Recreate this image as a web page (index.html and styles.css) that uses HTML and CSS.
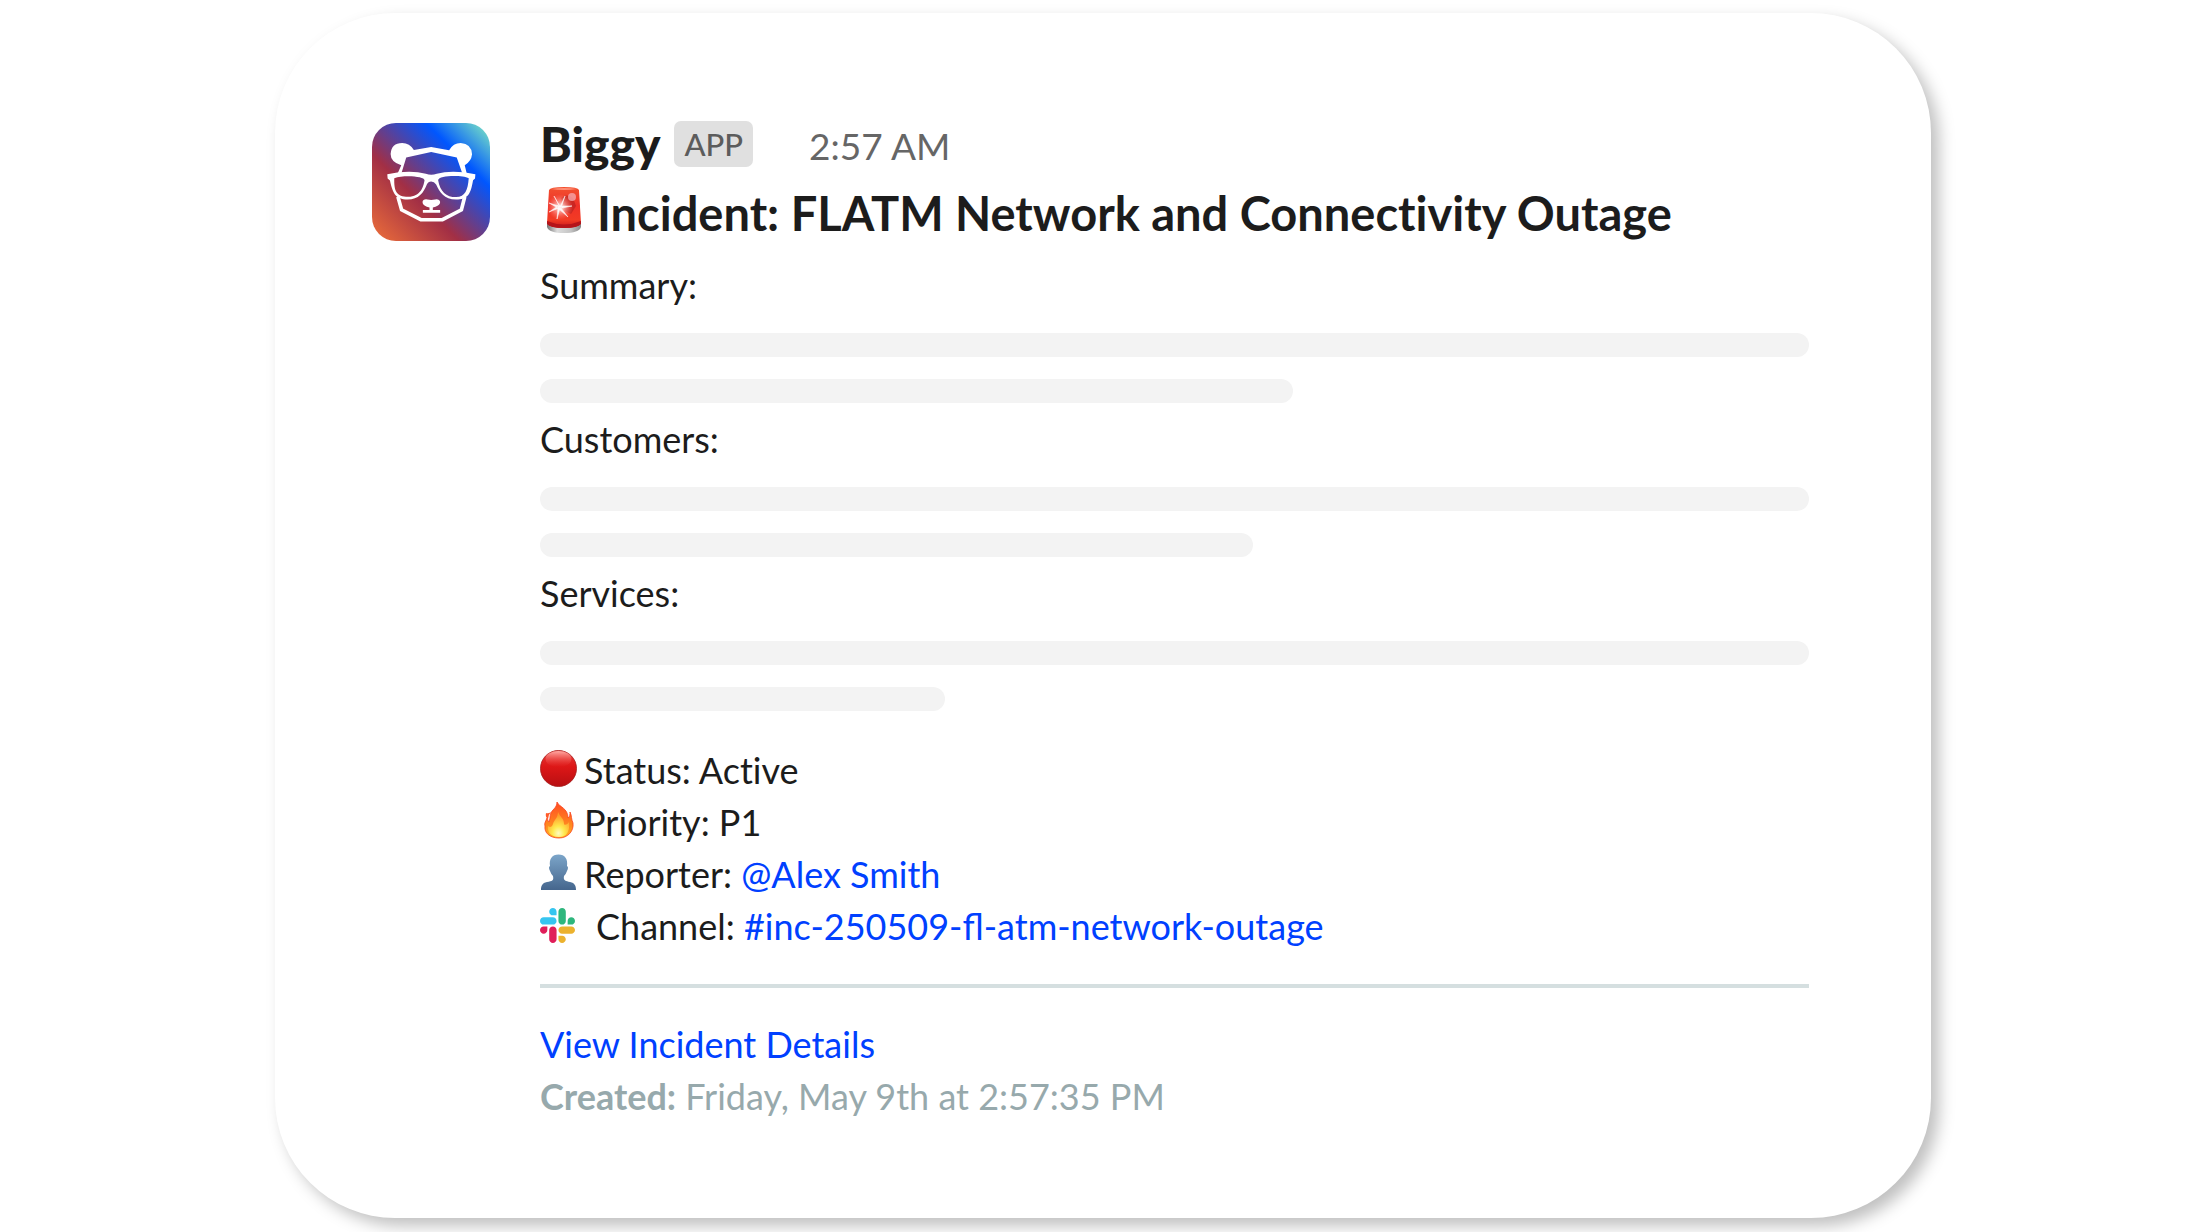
FILE: index.html
```html
<!DOCTYPE html>
<html lang="en">
<head>
  <meta charset="UTF-8">
  <meta name="viewport" content="width=device-width, initial-scale=1.0">
  <title>Biggy Incident</title>
  <link rel="stylesheet" href="styles.css">
</head>
<body>

<main class="card">
  <!-- Biggy avatar -->
  <svg class="avatar" viewBox="35 38 355 355" aria-hidden="true">
    <defs>
      <linearGradient id="avatarFill" gradientUnits="userSpaceOnUse" x1="35" y1="393" x2="390" y2="38">
        <stop offset="0.05" stop-color="#e4673b"/>
        <stop offset="0.37" stop-color="#a22f45"/>
        <stop offset="0.73" stop-color="#0057ff"/>
        <stop offset="0.96" stop-color="#70d8c8"/>
      </linearGradient>
    </defs>
    <rect x="35" y="38" width="355" height="355" rx="72" fill="url(#avatarFill)"/>
    <g fill="#fff">
      <path d="M112 190L123 165Q91 155 91 131Q93 98 126 98Q148 98 161 119L213 110L267 120Q279 98 302 98Q334 100 336 132Q334 153 314 165L320 190L306 188L290 142L213 125L138 142L124 188Z"/>
      <path fill-rule="evenodd" d="M81 192Q150 178 197 191Q213 197 230 191Q275 178 346 192L345 205L339 210C332 252 323 268 288 268C252 268 238 246 228 223Q222 214 213 214Q204 214 200 223C190 248 176 268 142 268C106 268 98 251 89 211L82 205ZM102 204C101 242 108 260 144 260C181 259 190 230 193 210C194 198 130 193 102 204ZM234 210C240 244 258 261 288 261C316 259 323 240 326 204C306 194 235 195 234 210Z"/>
      <path d="M187 276Q188 266 202 268L213 270L225 268Q238 266 240 276Q240 286 226 290L218 292V300H240V308H188V300H208V292L200 290Q187 285 187 276Z"/>
    </g>
    <path d="M113 260L124 299L182 329H247L304 299L314 260" fill="none" stroke="#fff" stroke-width="11"/>
  </svg>

  <article class="message">
    <header class="sender">
      <span class="name">Biggy</span>
      <span class="badge">APP</span>
      <time class="time">2:57 AM</time>
    </header>

    <h1 class="title">
      <svg class="siren" viewBox="0 0 36 48" aria-hidden="true">
        <defs>
          <linearGradient id="sirenBase" x1="0" x2="1">
            <stop offset="0" stop-color="#777"/>
            <stop offset="0.3" stop-color="#ddd"/>
            <stop offset="0.7" stop-color="#c4c4c4"/>
            <stop offset="1" stop-color="#888"/>
          </linearGradient>
          <linearGradient id="sirenGlass" x1="0" y1="0" x2="0" y2="1">
            <stop offset="0" stop-color="#f2512f"/>
            <stop offset="0.45" stop-color="#ef3028"/>
            <stop offset="0.8" stop-color="#f23b24"/>
            <stop offset="1" stop-color="#c5161b"/>
          </linearGradient>
          <radialGradient id="sirenGlow">
            <stop offset="0" stop-color="#fff"/>
            <stop offset="0.3" stop-color="#ffc6c0" stop-opacity="0.8"/>
            <stop offset="1" stop-color="#ff7365" stop-opacity="0"/>
          </radialGradient>
        </defs>
        <path d="M1 37Q18 41 35 37V41Q33 47 18 47Q3 47 1 41Z" fill="url(#sirenBase)"/>
        <path d="M3 4Q4 1 18 1Q32 1 33 4L35 37Q33 42 18 42Q3 42 1 37Z" fill="url(#sirenGlass)"/>
        <path d="M1 35Q18 42 35 35V38Q32 42 18 42Q4 42 1 38Z" fill="#b5141a"/>
        <path d="M5 3Q18 1 31 3Q18 5 5 3Z" fill="#ff9077"/>
        <path d="M15 12Q21 7 27 12L30 20L25 28L19 25Z" fill="#a61a1b" opacity="0.5"/>
        <circle cx="26" cy="11" r="4" fill="#f5a6aa" opacity="0.8"/>
        <circle cx="14" cy="21" r="13" fill="url(#sirenGlow)"/>
        <path d="M14 21L8 10L13 19ZM14 21L19 10L16 19ZM15 20L26 20L16 22ZM15 22L22 31L13 23ZM14 22L11 33L12 22ZM13 22L3 26L12 20ZM13 20L3 17L12 22Z" fill="#fff" stroke="#fff" stroke-width="0.6" opacity="0.9"/>
      </svg>
      <span>Incident: FLATM Network and Connectivity Outage</span>
    </h1>

    <section class="field">
      <p class="label">Summary:</p>
      <div class="bar"></div>
      <div class="bar bar-summary"></div>
    </section>
    <section class="field">
      <p class="label">Customers:</p>
      <div class="bar"></div>
      <div class="bar bar-customers"></div>
    </section>
    <section class="field">
      <p class="label">Services:</p>
      <div class="bar"></div>
      <div class="bar bar-services"></div>
    </section>

    <ul class="details">
      <li>
        <svg class="icon" viewBox="0 0 37 37" aria-hidden="true">
          <defs>
            <linearGradient id="redDot" x1="0" y1="0" x2="0" y2="1">
              <stop offset="0" stop-color="#e53c38"/>
              <stop offset="0.45" stop-color="#dd1717"/>
              <stop offset="1" stop-color="#b80f12"/>
            </linearGradient>
            <linearGradient id="dotShine" x1="0" y1="0" x2="0" y2="1">
              <stop offset="0" stop-color="#ffaaa5"/>
              <stop offset="1" stop-color="#ee3a36" stop-opacity="0"/>
            </linearGradient>
          </defs>
          <circle cx="18.5" cy="18.5" r="18" fill="url(#redDot)" stroke="#a51c1b" stroke-width="0.8"/>
          <ellipse cx="18.5" cy="9" rx="13" ry="8" fill="url(#dotShine)"/>
        </svg>
        <span>Status: Active</span>
      </li>
      <li>
        <svg class="icon" viewBox="0 0 37 37" aria-hidden="true">
          <defs>
            <linearGradient id="flame" x1="0" y1="0" x2="0" y2="1">
              <stop offset="0" stop-color="#ff4b24"/>
              <stop offset="0.5" stop-color="#ff7a20"/>
              <stop offset="1" stop-color="#ffb01f"/>
            </linearGradient>
            <radialGradient id="flameCore" cx="0.5" cy="0.85" r="0.7">
              <stop offset="0" stop-color="#fffbc0"/>
              <stop offset="0.4" stop-color="#ffe94d"/>
              <stop offset="1" stop-color="#ff9c2a"/>
            </radialGradient>
          </defs>
          <path d="M17 0C19 5 28 6 28 16C30 15 30 12 30 10C32 14 31 17 33 21C34 29 28 36 19 36C10 36 4 31 5 24C4 21 6 19 7 16C8 18 8 19 9 20C11 15 9 12 13 8C16 5 17 3 17 0Z" fill="url(#flame)" stroke="#f9421e" stroke-width="0.8"/>
          <path d="M6 11Q8 12 11 10Q8 13 8 17Q5 15 6 11Z" fill="#ff5a28"/>
          <path d="M18 10C20 15 24 16 24 22C25 24 28 22 29 20C30 29 27 35 19 35C10 35 7 29 8 24C10 26 12 25 13 22C14 18 18 16 18 10Z" fill="url(#flameCore)"/>
        </svg>
        <span>Priority: P1</span>
      </li>
      <li>
        <svg class="icon" viewBox="0 0 37 37" aria-hidden="true">
          <defs>
            <linearGradient id="bust" x1="0" y1="0" x2="0" y2="1">
              <stop offset="0" stop-color="#7ca5c9"/>
              <stop offset="1" stop-color="#45668d"/>
            </linearGradient>
          </defs>
          <path d="M18.500 0.500C25 0.500 28 5 27 12Q29 13 27 17Q26 20 24 22C23 27 26 27 30 28C35 29 36 32 36 36H1C1 32 2 29 7 28C12 27 14 27 13 22Q11 20 10 17Q8 13 10 12C9 5 12 0.500 18.500 0.500Z" fill="url(#bust)"/>
        </svg>
        <span>Reporter: <a href="#">@Alex Smith</a></span>
      </li>
      <li class="channel">
        <svg class="slack" viewBox="0 0 122.8 122.8" aria-hidden="true">
          <path d="M25.800 77.600c0 7.100-5.800 12.900-12.900 12.900S0 84.700 0 77.600s5.800-12.900 12.900-12.900h12.900v12.900zm6.500 0c0-7.100 5.800-12.900 12.900-12.900s12.900 5.800 12.900 12.900v32.300c0 7.100-5.800 12.900-12.900 12.900s-12.900-5.800-12.900-12.900V77.600z" fill="#e01e5a"/>
          <path d="M45.200 25.800c-7.100 0-12.900-5.800-12.900-12.900S38.100 0 45.200 0s12.900 5.800 12.900 12.900v12.900H45.200zm0 6.500c7.100 0 12.900 5.800 12.900 12.900s-5.800 12.900-12.900 12.900H12.900C5.800 58.100 0 52.300 0 45.200s5.800-12.900 12.900-12.900h32.300z" fill="#36c5f0"/>
          <path d="M97 45.200c0-7.100 5.800-12.900 12.900-12.900s12.900 5.800 12.900 12.900-5.800 12.900-12.900 12.900H97V45.200zm-6.500 0c0 7.100-5.800 12.900-12.900 12.900s-12.900-5.800-12.900-12.900V12.900C64.700 5.800 70.500 0 77.600 0s12.900 5.800 12.900 12.900v32.300z" fill="#2eb67d"/>
          <path d="M77.600 97c7.100 0 12.900 5.800 12.900 12.900s-5.800 12.900-12.900 12.900-12.900-5.800-12.900-12.900V97h12.900zm0-6.500c-7.100 0-12.900-5.800-12.900-12.900s5.800-12.900 12.900-12.900h32.300c7.100 0 12.900 5.800 12.900 12.900s-5.800 12.900-12.900 12.900H77.600z" fill="#ecb22e"/>
        </svg>
        <span>Channel: <a href="#">#inc-250509-fl-atm-network-outage</a></span>
      </li>
    </ul>

    <hr class="divider">

    <footer>
      <a href="#">View Incident Details</a>
      <p class="created"><strong>Created:</strong> Friday, May 9th at 2:57:35 PM</p>
    </footer>
  </article>
</main>

</body>
</html>
```
FILE: styles.css
```css
* {
  box-sizing: border-box;
}

body {
  margin: 0;
  padding: 13px 270px 14px 275px;
  background: #fff;
  color: #1c1c1c;
  font-family: Lato, sans-serif;
  font-size: 36px;
  font-variant-ligatures: none;
  line-height: 52px;
}

h1, p, ul {
  margin: 0;
  padding: 0;
}

a {
  color: #0040ff;
  text-decoration: none;
}

.card {
  display: flex;
  align-items: flex-start;
  gap: 50px;
  padding: 102px 122px 96px 97px;
  background: #fff;
  border-radius: 120px;
  box-shadow: 8px 8px 16px rgba(0, 0, 0, 0.25);
}

.avatar {
  flex: none;
  width: 118px;
  height: 118px;
  margin-top: 8px;
}

.message {
  flex: 1;
  min-width: 0;
}

/* Sender row */
.sender {
  display: flex;
  align-items: center;
  height: 58px;
  line-height: 58px;
}

.name {
  font-family: "Lato Black", Lato, sans-serif;
  font-size: 48px;
  font-weight: 900;
}

.badge {
  margin-left: 14px;
  padding: 0 10px;
  border-radius: 7px;
  background: #e0e0e0;
  color: #5c5c5c;
  font-size: 31px;
  font-weight: 500;
  line-height: 46px;
}

.time {
  margin-left: 56px;
  padding-top: 4px;
  color: #666;
  font-size: 37px;
}

.title {
  display: flex;
  align-items: center;
  gap: 15px;
  margin: 8px 0 14px;
  padding-left: 6px;
  font-size: 47px;
  font-weight: 700;
  line-height: 64px;
}

.siren {
  flex: none;
  width: 36px;
  height: 48px;
  margin-bottom: 6px;
}

/* Placeholder text */
.field {
  margin-bottom: 10px;
}

.bar {
  height: 24px;
  margin-top: 22px;
  border-radius: 12px;
  background: #f3f3f3;
}

.bar-summary {
  width: 59.3%;
}

.bar-customers {
  width: 56.2%;
}

.bar-services {
  width: 31.9%;
}

.details {
  margin-top: 33px;
  list-style: none;
}

.details li {
  display: flex;
  align-items: center;
  gap: 7px;
}

.icon {
  flex: none;
  width: 37px;
  height: 37px;
  margin-bottom: 4px;
}

.details .channel {
  gap: 21px;
  font-variant-ligatures: normal;
}

.slack {
  flex: none;
  width: 35px;
  height: 35px;
  margin-bottom: 2px;
}

.divider {
  height: 4px;
  margin: 32px 0 30px;
  border: none;
  background: #d5dfe0;
}

.created {
  color: #97a9ac;
}
```
